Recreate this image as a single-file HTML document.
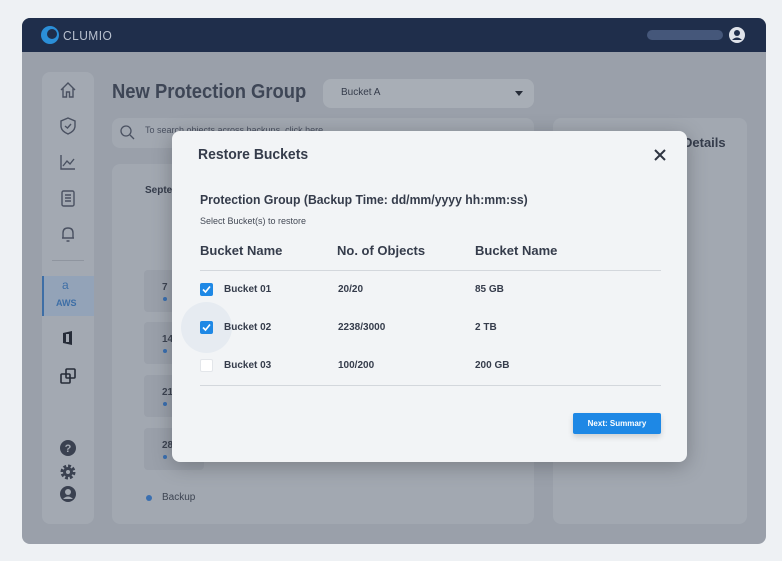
<!DOCTYPE html>
<html><head><meta charset="utf-8"><style>
*{margin:0;padding:0;box-sizing:border-box}
body{width:782px;height:561px;background:#eef1f4;font-family:"Liberation Sans","DejaVu Sans",sans-serif;position:relative;overflow:hidden}
.abs{position:absolute}
.frame{left:22px;top:18px;width:744px;height:526px;background:#9aa0aa;border-radius:8px;overflow:hidden}
.hdr{left:0;top:0;width:744px;height:34px;background:#1f2e4b}
.side{left:20px;top:54px;width:52px;height:452px;background:#a3a9b2;border-radius:8px}
.panel{background:#a2a8b1;border-radius:8px}
.ic{position:absolute;left:16px;width:20px;height:20px}
.modal{left:172px;top:131px;width:515px;height:331px;background:#f2f4f6;border-radius:8px;box-shadow:0 4px 20px rgba(0,0,0,.25)}
.t{position:absolute;color:#353c4b;white-space:nowrap}
.cb{position:absolute;left:28px;width:13px;height:13px;border-radius:2px;background:#1e88e5}
.cb svg{position:absolute;left:1px;top:1px}
.cal{position:absolute;left:32px;width:60px;height:42px;background:#9aa0aa;border-radius:4px}
.cal b{position:absolute;left:18px;top:12px;font-size:10px;color:#3d4452}
.cal i{position:absolute;left:19px;top:27px;width:4px;height:4px;border-radius:50%;background:#3a6fb0}
</style></head><body>
<div class="abs frame">
 <div class="abs hdr">
  <svg class="abs" style="left:18px;top:7px" width="20" height="20" viewBox="0 0 20 20"><circle cx="10" cy="10" r="9" fill="#2b8fd8"/><circle cx="12" cy="9" r="5" fill="#1f2e4b"/></svg>
  <div class="t" style="left:41px;top:10px;color:#b9c1cf;font-size:13px;letter-spacing:.5px;transform:scaleX(.92);transform-origin:left">CLUMIO</div>
  <div class="abs" style="left:625px;top:12px;width:76px;height:10px;border-radius:5px;background:#45577a"></div>
  <svg class="abs" style="left:707px;top:9px" width="16" height="16" viewBox="0 0 16 16"><circle cx="8" cy="8" r="8" fill="#dfe3ea"/><circle cx="8" cy="6" r="3" fill="#1f2e4b"/><path d="M3 13 Q8 8 13 13" fill="#1f2e4b"/></svg>
 </div>
 <div class="abs side">
  <svg class="ic" style="top:8px" viewBox="0 0 20 20" fill="none" stroke="#4a5161" stroke-width="1.4"><path d="M3 10 L10 3 L17 10 M5 8 V17 H8.5 V12 H11.5 V17 H15 V8"/></svg>
  <svg class="ic" style="top:44px" viewBox="0 0 20 20" fill="none" stroke="#4a5161" stroke-width="1.4"><path d="M10 2 L17 5 V10 Q17 15 10 18 Q3 15 3 10 V5 Z M7 10 L9.5 12 L13 8"/></svg>
  <svg class="ic" style="top:80px" viewBox="0 0 20 20" fill="none" stroke="#4a5161" stroke-width="1.4"><path d="M3 3 V17 H17 M5 14 L9 9 L12 12 L16 7"/></svg>
  <svg class="ic" style="top:116px" viewBox="0 0 20 20" fill="none" stroke="#4a5161" stroke-width="1.4"><rect x="4" y="3" width="12" height="15" rx="1.5"/><path d="M7 7 H13 M7 10 H13 M7 13 H13"/></svg>
  <svg class="ic" style="top:152px" viewBox="0 0 20 20" fill="none" stroke="#4a5161" stroke-width="1.4"><path d="M5 14 V9 Q5 4 10 4 Q15 4 15 9 V14 H4 H16 M8.5 17 H11.5"/></svg>
  <div class="abs" style="left:10px;top:188px;width:32px;height:1px;background:#8f959f"></div>
  <div class="abs" style="left:0;top:204px;width:52px;height:40px;background:#93a3b8;border-left:2px solid #3d6ea6"></div>
  <div class="t" style="left:20px;top:206px;color:#3d6ea6;font-size:12px">a</div>
  <div class="t" style="left:14px;top:226px;color:#3d6ea6;font-size:9px;font-weight:bold">AWS</div>
  <svg class="ic" style="top:256px" viewBox="0 0 20 20"><path d="M5 5 L14 3 V17 L5 15 Z" fill="#262c38"/><rect x="8" y="6" width="3" height="8" fill="#a3a9b2"/></svg>
  <svg class="ic" style="top:294px" viewBox="0 0 20 20" fill="none" stroke="#262c38" stroke-width="1.6"><rect x="8" y="3" width="9" height="9" rx="1"/><rect x="3" y="8" width="9" height="9" rx="1"/></svg>
  <svg class="ic" style="top:366px" viewBox="0 0 20 20"><circle cx="10" cy="10" r="8" fill="#3a4150"/><text x="10" y="14" font-size="11" font-weight="bold" fill="#a3a9b2" text-anchor="middle" font-family="Liberation Sans">?</text></svg>
  <svg class="ic" style="top:390px" viewBox="0 0 20 20"><circle cx="10" cy="10" r="5.5" fill="none" stroke="#3a4150" stroke-width="4" stroke-dasharray="2.6 1.7"/><circle cx="10" cy="10" r="5" fill="#3a4150"/><circle cx="10" cy="10" r="2" fill="#a3a9b2"/></svg>
  <svg class="ic" style="top:412px" viewBox="0 0 20 20"><circle cx="10" cy="10" r="8" fill="#3a4150"/><circle cx="10" cy="8" r="3" fill="#a3a9b2"/><path d="M5 15 Q10 10 15 15" fill="#a3a9b2"/></svg>
 </div>
 <div class="t" style="left:90px;top:63px;font-size:20px;font-weight:bold;color:#3e4656;transform:scaleX(.92);transform-origin:left">New Protection Group</div>
 <div class="abs panel" style="left:301px;top:61px;width:211px;height:29px;background:#a8aeb6"></div>
 <div class="t" style="left:319px;top:69px;font-size:10px">Bucket A</div>
 <div class="abs" style="left:493px;top:73px;width:0;height:0;border-left:4px solid transparent;border-right:4px solid transparent;border-top:5px solid #262c38"></div>
 <div class="abs panel" style="left:90px;top:100px;width:422px;height:30px"></div>
 <svg class="abs" style="left:97px;top:106px" width="16" height="16" viewBox="0 0 16 16" fill="none" stroke="#4a5161" stroke-width="1.3"><circle cx="7" cy="7" r="5"/><path d="M11 11 L15 15"/></svg>
 <div class="t" style="left:123px;top:107px;font-size:9px;color:#4a5161">To search objects across backups, click here</div>
 <div class="abs panel" style="left:90px;top:146px;width:422px;height:360px">
  <div class="t" style="left:33px;top:21px;font-size:10px;font-weight:bold">September</div>
  <div class="cal" style="top:106px"><b>7</b><i></i></div>
  <div class="cal" style="top:158px"><b>14</b><i></i></div>
  <div class="cal" style="top:211px"><b>21</b><i></i></div>
  <div class="cal" style="top:264px"><b>28</b><i></i></div>
  <div class="abs" style="left:34px;top:331px;width:6px;height:6px;border-radius:50%;background:#3a6fb0"></div>
  <div class="t" style="left:50px;top:328px;font-size:10px;color:#3d4452">Backup</div>
 </div>
 <div class="abs panel" style="left:531px;top:100px;width:194px;height:406px">
  <div class="t" style="left:130px;top:17px;font-size:13px;font-weight:bold">Details</div>
 </div>
</div>
<div class="abs modal">
 <div class="t" style="left:26px;top:15px;font-size:15px;font-weight:bold;transform:scaleX(.93);transform-origin:left">Restore Buckets</div>
 <svg class="abs" style="left:482px;top:18px" width="12" height="12" viewBox="0 0 12 12" stroke="#2f3542" stroke-width="2"><path d="M1 1 L11 11 M11 1 L1 11"/></svg>
 <div class="t" style="left:28px;top:61px;font-size:13px;font-weight:bold;transform:scaleX(.94);transform-origin:left">Protection Group (Backup Time: dd/mm/yyyy hh:mm:ss)</div>
 <div class="t" style="left:28px;top:85px;font-size:9px;color:#444a56">Select Bucket(s) to restore</div>
 <div class="t" style="left:28px;top:112px;font-size:13px;font-weight:bold">Bucket Name</div>
 <div class="t" style="left:165px;top:112px;font-size:13px;font-weight:bold">No. of Objects</div>
 <div class="t" style="left:303px;top:112px;font-size:13px;font-weight:bold">Bucket Name</div>
 <div class="abs" style="left:28px;top:139px;width:461px;height:1px;background:#d3d7dc"></div>
 <div class="abs" style="left:9px;top:171px;width:51px;height:51px;border-radius:50%;background:#e6ebf1"></div>
 <div class="cb" style="top:152px"><svg width="11" height="11" viewBox="0 0 11 11" fill="none" stroke="#fff" stroke-width="1.6"><path d="M2 5.5 L4.5 8 L9 2.5"/></svg></div>
 <div class="cb" style="top:190px"><svg width="11" height="11" viewBox="0 0 11 11" fill="none" stroke="#fff" stroke-width="1.6"><path d="M2 5.5 L4.5 8 L9 2.5"/></svg></div>
 <div class="cb" style="top:228px;background:#fff;border:1px solid #e3e6ea"></div>
 <div class="t" style="left:52px;top:153px;font-size:10px;font-weight:bold">Bucket 01</div>
 <div class="t" style="left:166px;top:153px;font-size:10px;font-weight:bold">20/20</div>
 <div class="t" style="left:303px;top:153px;font-size:10px;font-weight:bold">85 GB</div>
 <div class="t" style="left:52px;top:191px;font-size:10px;font-weight:bold">Bucket 02</div>
 <div class="t" style="left:166px;top:191px;font-size:10px;font-weight:bold">2238/3000</div>
 <div class="t" style="left:303px;top:191px;font-size:10px;font-weight:bold">2 TB</div>
 <div class="t" style="left:52px;top:229px;font-size:10px;font-weight:bold">Bucket 03</div>
 <div class="t" style="left:166px;top:229px;font-size:10px;font-weight:bold">100/200</div>
 <div class="t" style="left:303px;top:229px;font-size:10px;font-weight:bold">200 GB</div>
 <div class="abs" style="left:28px;top:254px;width:461px;height:1px;background:#d3d7dc"></div>
 <div class="abs" style="left:401px;top:282px;width:88px;height:21px;background:#1e88e5;border-radius:2px;box-shadow:0 3px 6px rgba(0,0,0,.15);color:#fff;font-size:8px;font-weight:bold;text-align:center;line-height:21px">Next: Summary</div>
</div>
</body></html>
